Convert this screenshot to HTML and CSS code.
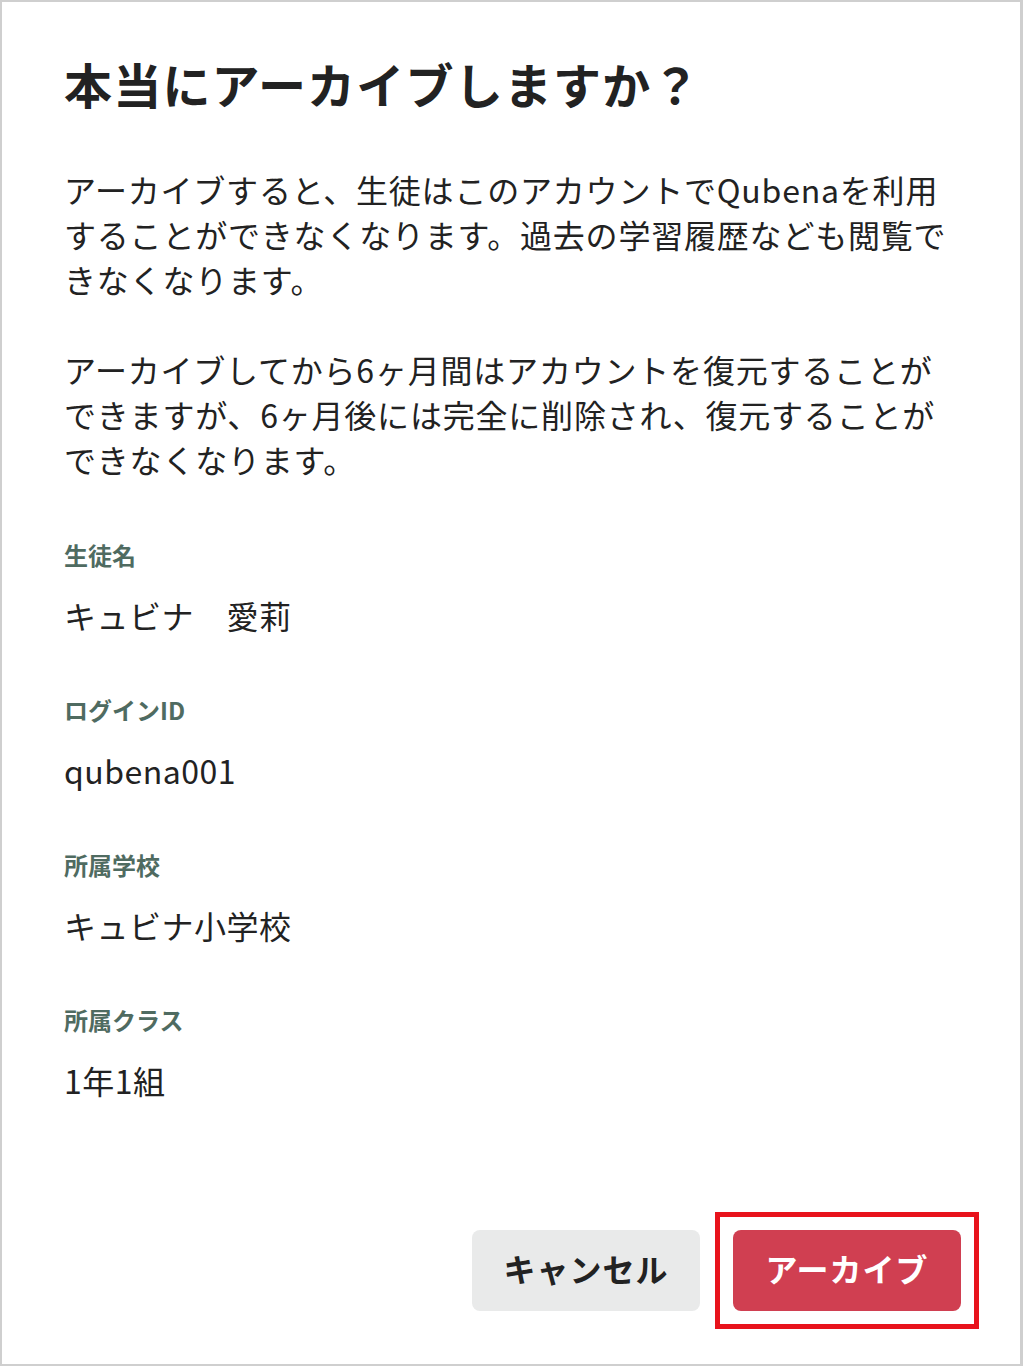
FILE: index.html
```html
<!DOCTYPE html>
<html lang="ja">
<head>
<meta charset="utf-8">
<title>アーカイブ確認</title>
<link rel="stylesheet" href="styles.css">
</head>
<body>
<div class="frame">
  <h1 class="title">本当にアーカイブしますか？</h1>
  <p class="desc">アーカイブすると、生徒はこのアカウントでQubenaを利用<br>することができなくなります。過去の学習履歴なども閲覧で<br>きなくなります。</p>
  <p class="desc desc-2">アーカイブしてから6ヶ月間はアカウントを復元することが<br>できますが、6ヶ月後には完全に削除され、復元することが<br>できなくなります。</p>
  <dl class="fields">
    <div class="field">
      <dt class="label">生徒名</dt>
      <dd class="value">キュビナ　愛莉</dd>
    </div>
    <div class="field">
      <dt class="label">ログインID</dt>
      <dd class="value">qubena001</dd>
    </div>
    <div class="field">
      <dt class="label">所属学校</dt>
      <dd class="value">キュビナ小学校</dd>
    </div>
    <div class="field">
      <dt class="label">所属クラス</dt>
      <dd class="value">1年1組</dd>
    </div>
  </dl>
  <div class="footer">
    <button class="btn btn-cancel" type="button">キャンセル</button>
    <span class="highlight">
      <button class="btn btn-archive" type="button">アーカイブ</button>
    </span>
  </div>
</div>
</body>
</html>
```

FILE: styles.css
```css
html, body {
  margin: 0;
  padding: 0;
  background: #ffffff;
}

body {
  font-family: "Noto Sans CJK JP", "Noto Sans", sans-serif;
  color: #222222;
}

.frame {
  box-sizing: border-box;
  width: 1023px;
  height: 1366px;
  border: 2px solid #cfcfcf;
  border-right-width: 3px;
  padding: 51px 41px 35px 62px;
  display: flex;
  flex-direction: column;
}

.title {
  margin: 0;
  font-size: 48px;
  line-height: 60px;
  font-weight: 700;
  color: #222222;
  letter-spacing: 1.2px;
}

.desc {
  margin: 54px 0 0 0;
  font-size: 32px;
  line-height: 45px;
  font-weight: 400;
  letter-spacing: 0.8px;
  color: #222222;
  white-space: nowrap;
}

.desc-2 {
  margin-top: 45px;
}

.fields {
  margin: 57px 0 0 0;
  display: flex;
  flex-direction: column;
  gap: 56px;
}

.field {
  display: flex;
  flex-direction: column;
  gap: 22px;
}

.label {
  margin: 0;
  font-size: 24px;
  line-height: 32px;
  font-weight: 700;
  color: #4f6b61;
}

.value {
  margin: 0;
  font-size: 32px;
  line-height: 45px;
  font-weight: 400;
  letter-spacing: 0.5px;
  color: #222222;
}

.footer {
  margin-top: auto;
  display: flex;
  justify-content: flex-end;
  align-items: center;
  gap: 15px;
}

.highlight {
  display: block;
  border: 5px solid #e8131c;
  padding: 13px;
}

.btn {
  display: block;
  box-sizing: border-box;
  width: 228px;
  height: 81px;
  border: none;
  border-radius: 8px;
  font-family: "Noto Sans CJK JP", "Noto Sans", sans-serif;
  font-size: 32px;
  line-height: 40px;
  font-weight: 700;
  letter-spacing: 1px;
  padding: 0 0 6px 0;
  cursor: pointer;
}

.btn-cancel {
  background: #e9eaea;
  color: #222222;
}

.btn-archive {
  background: #d03f51;
  color: #ffffff;
}
```
